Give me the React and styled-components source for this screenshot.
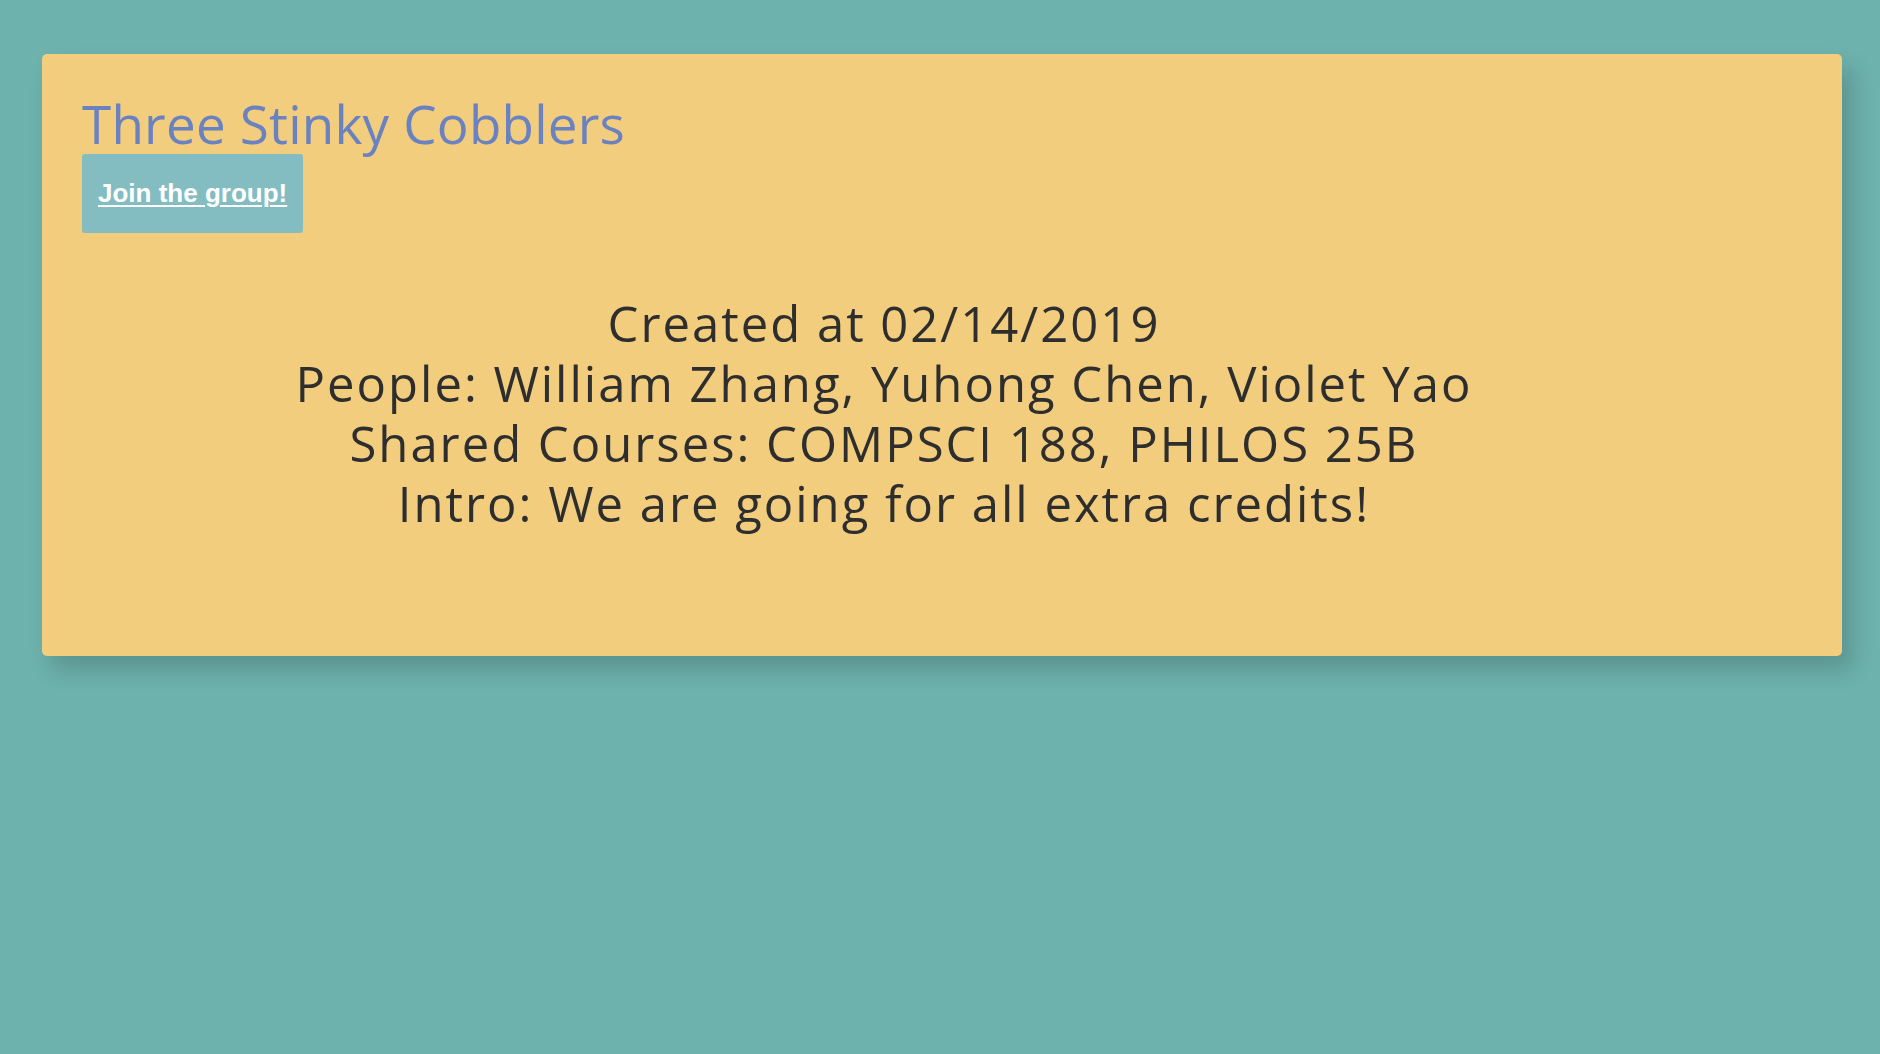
import React from 'react'
import styled, { createGlobalStyle } from 'styled-components'

const group = {
  name: 'Three Stinky Cobblers',
  created: '02/14/2019',
  people: ['William Zhang', 'Yuhong Chen', 'Violet Yao'],
  courses: ['COMPSCI 188', 'PHILOS 25B'],
  intro: 'We are going for all extra credits!',
}

const App = () => {
  return (
    <>
      <GlobalStyle />
      <Page>
        <Card>
          <Title>{group.name}</Title>
          <JoinButton type='button'>
            <JoinLabel>Join the group!</JoinLabel>
          </JoinButton>
          <Details>
            <Line>Created at {group.created}</Line>
            <Line>People: {group.people.join(', ')}</Line>
            <Line>Shared Courses: {group.courses.join(', ')}</Line>
            <Line>Intro: {group.intro}</Line>
          </Details>
        </Card>
      </Page>
    </>
  )
}

const GlobalStyle = createGlobalStyle`
  html, body {
    margin: 0;
    padding: 0;
    background: #6db2ad;
  }

  body {
    min-height: 1054px;
    font-family: 'Open Sans', 'Noto Sans', sans-serif;
  }
`

const Page = styled.div`
  padding: 54px 38px 0 42px;
`

const Card = styled.div`
  box-sizing: border-box;
  width: 1800px;
  height: 602px;
  padding: 40px 40px;

  background: #f2cd7e;
  border-radius: 5px;
  box-shadow: 10px 14px 22px rgba(0, 0, 0, 0.17);
`

const Title = styled.h1`
  margin: 0;
  font-family: 'Open Sans', 'Noto Sans', sans-serif;
  font-size: 53px;
  font-weight: 400;
  line-height: 60px;
  letter-spacing: 0.2px;
  color: #6a82c0;
`

const JoinButton = styled.button`
  display: block;
  margin-top: 0;
  padding: 0 16px;
  height: 79px;

  background: #84bdc1;
  border: none;
  border-radius: 3px;
  cursor: pointer;
`

const JoinLabel = styled.span`
  font-family: 'Liberation Sans', Arial, sans-serif;
  font-size: 26px;
  font-weight: 700;
  color: #ffffff;
  text-decoration: underline;
  text-decoration-thickness: 2px;
  text-underline-offset: 3px;
`

const Details = styled.div`
  margin: 60px 116px 0 0;
  text-align: center;
`

const Line = styled.p`
  margin: 0;
  font-size: 49px;
  line-height: 60px;
  letter-spacing: 2px;
  color: #2e2e2e;
`

export default App
